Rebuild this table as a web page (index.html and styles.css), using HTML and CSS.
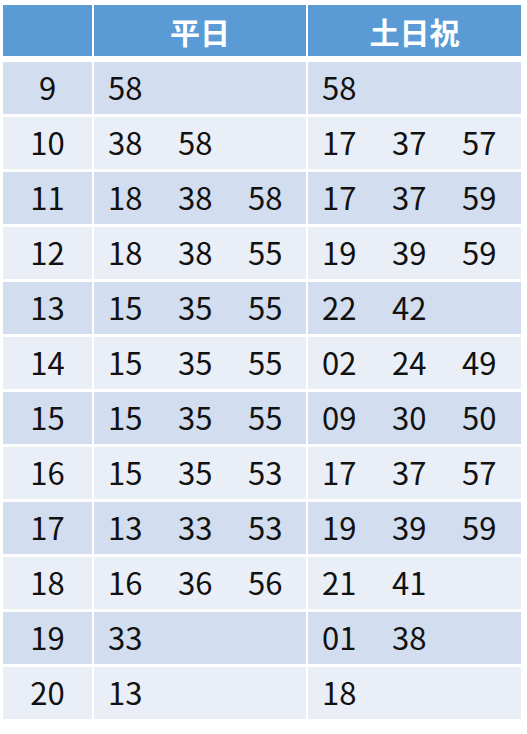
FILE: index.html
```html
<!DOCTYPE html>
<html lang="ja">
<head>
<meta charset="utf-8">
<title>時刻表</title>
<link rel="stylesheet" href="styles.css">
</head>
<body>
<div class="timetable">
  <div class="head"></div>
  <div class="head">平日</div>
  <div class="head">土日祝</div>

  <div class="hour dark">9</div>
  <div class="times dark"><span>58</span></div>
  <div class="times dark"><span>58</span></div>

  <div class="hour light">10</div>
  <div class="times light"><span>38</span><span>58</span></div>
  <div class="times light"><span>17</span><span>37</span><span>57</span></div>

  <div class="hour dark">11</div>
  <div class="times dark"><span>18</span><span>38</span><span>58</span></div>
  <div class="times dark"><span>17</span><span>37</span><span>59</span></div>

  <div class="hour light">12</div>
  <div class="times light"><span>18</span><span>38</span><span>55</span></div>
  <div class="times light"><span>19</span><span>39</span><span>59</span></div>

  <div class="hour dark">13</div>
  <div class="times dark"><span>15</span><span>35</span><span>55</span></div>
  <div class="times dark"><span>22</span><span>42</span></div>

  <div class="hour light">14</div>
  <div class="times light"><span>15</span><span>35</span><span>55</span></div>
  <div class="times light"><span>02</span><span>24</span><span>49</span></div>

  <div class="hour dark">15</div>
  <div class="times dark"><span>15</span><span>35</span><span>55</span></div>
  <div class="times dark"><span>09</span><span>30</span><span>50</span></div>

  <div class="hour light">16</div>
  <div class="times light"><span>15</span><span>35</span><span>53</span></div>
  <div class="times light"><span>17</span><span>37</span><span>57</span></div>

  <div class="hour dark">17</div>
  <div class="times dark"><span>13</span><span>33</span><span>53</span></div>
  <div class="times dark"><span>19</span><span>39</span><span>59</span></div>

  <div class="hour light">18</div>
  <div class="times light"><span>16</span><span>36</span><span>56</span></div>
  <div class="times light"><span>21</span><span>41</span></div>

  <div class="hour dark">19</div>
  <div class="times dark"><span>33</span></div>
  <div class="times dark"><span>01</span><span>38</span></div>

  <div class="hour light">20</div>
  <div class="times light"><span>13</span></div>
  <div class="times light"><span>18</span></div>
</div>
</body>
</html>
```
FILE: styles.css
```css
html, body {
  margin: 0;
  padding: 0;
  background: #ffffff;
}
body {
  padding: 5px 0 0 3px;
  font-family: "Noto Sans CJK JP", "Noto Sans", sans-serif;
  color: #111111;
}
.timetable {
  display: grid;
  grid-template-columns: 89px 212px 213px;
  grid-template-rows: 54px;
  grid-auto-rows: 52px;
  column-gap: 2px;
  row-gap: 3px;
}
.head {
  background: #5b9bd5;
  color: #ffffff;
  font-weight: 700;
  font-size: 30px;
  line-height: 1;
  display: flex;
  align-items: center;
  justify-content: center;
  margin-bottom: 3px;
}
.hour, .times {
  font-size: 31px;
  font-weight: 400;
  line-height: 1;
  display: flex;
  align-items: center;
  padding-bottom: 4px;
  box-sizing: border-box;
}
.hour {
  justify-content: center;
}
.times {
  padding-left: 14px;
}
.times span {
  flex: none;
  width: 70px;
}
.dark {
  background: #d2deef;
}
.light {
  background: #eaeff7;
}
```
